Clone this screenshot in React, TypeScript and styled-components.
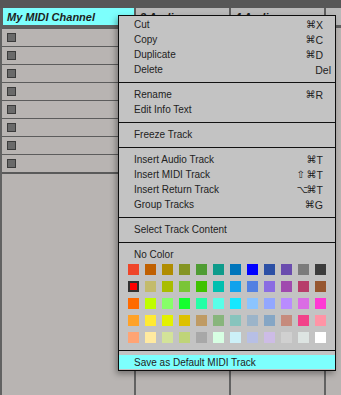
import React from "react";
import styled, { createGlobalStyle } from "styled-components";

const Global = createGlobalStyle`
  html, body {
    margin: 0;
    padding: 0;
    background: #b8b4b2;
  }
  * {
    box-sizing: border-box;
  }
`;

const Screen = styled.div`
  position: relative;
  width: 341px;
  height: 395px;
  overflow: hidden;
  display: flex;
  flex-direction: column;
  background: #b8b4b2;
  font-family: "Liberation Sans", Arial, sans-serif;
  color: #1e1e1e;
`;

const TopBar = styled.div`
  height: 8px;
  flex: none;
  background: #575757;
`;

const HeaderRow = styled.div`
  display: flex;
  gap: 2px;
  flex: none;
  height: 20px;
  padding-left: 3px;
  border-bottom: 3px solid #5e5e5e;
  background: #5e5e5e;
`;

const TrackHeader = styled.div<{ $selected?: boolean; $width: number }>`
  flex: none;
  width: ${({ $width }) => $width}px;
  height: 17px;
  padding-left: 4px;
  display: flex;
  align-items: center;
  font-size: 11px;
  font-weight: bold;
  font-style: italic;
  white-space: nowrap;
  overflow: hidden;
  background: ${({ $selected }) => ($selected ? "#7dfffd" : "#b9b9b9")};
`;

const Tracks = styled.div`
  flex: 1;
  display: flex;
`;

const TrackColumn = styled.div<{ $width: number }>`
  flex: none;
  width: ${({ $width }) => $width}px;
  border-left: 2px solid #626262;
  display: flex;
  flex-direction: column;
`;

const Slot = styled.div`
  height: 18px;
  border-top: 1px solid #5c5c5c;
  padding: 4px 0 0 5px;
`;

const StopBox = styled.div`
  width: 9px;
  height: 9px;
  background: #6a6a6a;
  border: 1px solid #3b3b3b;
`;

const SlotEnd = styled.div`
  height: 2px;
  background: #5a5a5a;
`;

const ContextMenu = styled.div`
  position: absolute;
  left: 118px;
  top: 15px;
  width: 218px;
  height: 356px;
  background: #c3c3c3;
  border: 1px solid #0d0d0d;
  box-shadow: -2px 3px 6px rgba(0, 0, 0, 0.35);
  font-size: 10px;
  color: #222;
  display: flex;
  flex-direction: column;
`;

const Section = styled.div<{ $top?: number; $bottom?: number }>`
  padding-top: ${({ $top = 4 }) => $top}px;
  padding-bottom: ${({ $bottom = 5 }) => $bottom}px;
  border-bottom: 1px solid #111;

  &:last-child {
    border-bottom: none;
  }
`;

const Item = styled.div<{ $highlight?: boolean; $keyRight?: number }>`
  height: ${({ $highlight }) => ($highlight ? 14 : 15)}px;
  display: flex;
  align-items: center;
  justify-content: space-between;
  padding-left: 15px;
  padding-right: ${({ $keyRight = 12 }) => $keyRight}px;
  background: ${({ $highlight }) => ($highlight ? "#7dfffd" : "transparent")};
  white-space: nowrap;
`;

const Shortcut = styled.span`
  display: flex;
  align-items: center;
  gap: 2px;
  font-size: 10.5px;
`;

const Modifier = styled.span`
  font-family: "DejaVu Sans", sans-serif;
  font-size: 10px;
  width: 8px;
  text-align: center;
  color: #1a1a1a;
`;

const Swatches = styled.div`
  display: grid;
  grid-template-columns: repeat(12, 11px);
  grid-auto-rows: 11px;
  gap: 6px;
  padding: 2px 0 0 9px;
`;

const Swatch = styled.div<{ $color: string; $selected?: boolean }>`
  background: ${({ $color }) => $color};
  box-shadow: ${({ $selected }) =>
    $selected ? "inset 0 0 0 2px #303030" : "none"};
`;

const palette = [
  ["#ef4528", "#c06000", "#b08d00", "#849423", "#4f9c33", "#0e9b8b", "#0075bb", "#0000ff", "#2c50a5", "#6a4cae", "#7c7c7c", "#3c3c3c"],
  ["#ff0000", "#c3bb6b", "#a9bd00", "#7ac537", "#3fc200", "#00bfaf", "#10a2ec", "#5380e2", "#8a6ce2", "#a04aae", "#b73d6a", "#96562f"],
  ["#ff6a00", "#bffe00", "#86ff69", "#14ff2e", "#24ffa6", "#5afee8", "#16e8ff", "#8bc4ff", "#92a7ff", "#b98cff", "#da6ce4", "#ff38d4"],
  ["#ffa227", "#ffea32", "#e3f100", "#ddc100", "#bf9b64", "#88b57c", "#87c4bd", "#9bb4c9", "#85a6c5", "#c68b7d", "#f2428a", "#ff94a6"],
  ["#ffa474", "#ffeaa0", "#d3e399", "#bfd478", "#a8a8a8", "#d7ffe3", "#ccf0f8", "#b7bfe5", "#cdbce6", "#d0d0d0", "#dde4e2", "#ffffff"],
];

type MenuEntry = {
  label: string;
  mods?: string[];
  key?: string;
  keyRight?: number;
};

const sections: MenuEntry[][] = [
  [
    { label: "Cut", mods: ["⌘"], key: "X" },
    { label: "Copy", mods: ["⌘"], key: "C" },
    { label: "Duplicate", mods: ["⌘"], key: "D" },
    { label: "Delete", key: "Del", keyRight: 4 },
  ],
  [{ label: "Rename", mods: ["⌘"], key: "R" }, { label: "Edit Info Text" }],
  [{ label: "Freeze Track" }],
  [
    { label: "Insert Audio Track", mods: ["⌘"], key: "T" },
    { label: "Insert MIDI Track", mods: ["⇧", "⌘"], key: "T" },
    { label: "Insert Return Track", mods: ["⌥", "⌘"], key: "T" },
    { label: "Group Tracks", mods: ["⌘"], key: "G" },
  ],
  [{ label: "Select Track Content" }],
];

const headers = [
  { name: "My MIDI Channel", width: 131, selected: true },
  { name: "3 Audio", width: 93 },
  { name: "4 Audio", width: 93 },
  { name: "", width: 40 },
];

const columnWidths = [134, 95, 95, 40];

export default function App() {
  return (
    <>
      <Global />
      <Screen>
        <TopBar />
        <HeaderRow>
          {headers.map((h, i) => (
            <TrackHeader key={i} $width={h.width} $selected={h.selected}>
              {h.name}
            </TrackHeader>
          ))}
        </HeaderRow>
        <Tracks>
          {columnWidths.map((w, i) => (
            <TrackColumn key={i} $width={w}>
              {i === 0 && (
                <>
                  {Array.from({ length: 8 }).map((_, r) => (
                    <Slot key={r}>
                      <StopBox />
                    </Slot>
                  ))}
                  <SlotEnd />
                </>
              )}
            </TrackColumn>
          ))}
        </Tracks>

        <ContextMenu>
          {sections.map((items, s) => (
            <Section key={s} $top={s === 0 ? 1 : 4}>
              {items.map((it) => (
                <Item key={it.label} $keyRight={it.keyRight}>
                  <span>{it.label}</span>
                  {it.key && (
                    <Shortcut>
                      {it.mods?.map((m) => (
                        <Modifier key={m}>{m}</Modifier>
                      ))}
                      <span>{it.key}</span>
                    </Shortcut>
                  )}
                </Item>
              ))}
            </Section>
          ))}
          <Section $bottom={7}>
            <Item>No Color</Item>
            <Swatches>
              {palette.flatMap((row, r) =>
                row.map((c, k) => (
                  <Swatch
                    key={`${r}-${k}`}
                    $color={c}
                    $selected={r === 1 && k === 0}
                  />
                ))
              )}
            </Swatches>
          </Section>
          <Section $top={4} $bottom={0}>
            <Item $highlight>Save as Default MIDI Track</Item>
          </Section>
        </ContextMenu>
      </Screen>
    </>
  );
}
